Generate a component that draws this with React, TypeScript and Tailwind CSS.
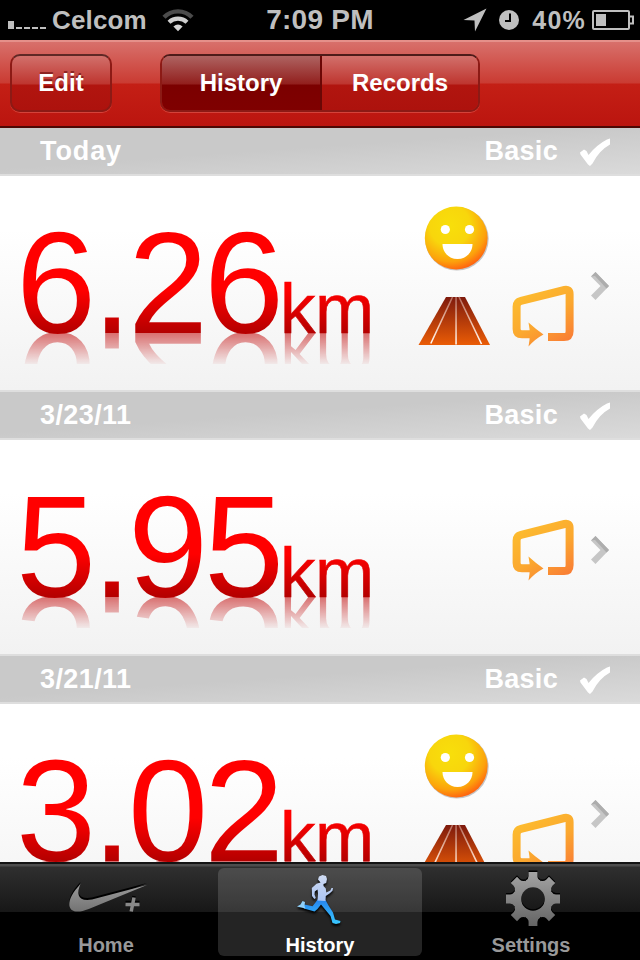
import clsx from "clsx";

interface Run {
  id: number;
  label: string;
  distance: string;
  mood: boolean;
}

const runs: Run[] = [
  { id: 1, label: "Today", distance: "6.26", mood: true },
  { id: 2, label: "3/23/11", distance: "5.95", mood: false },
  { id: 3, label: "3/21/11", distance: "3.02", mood: true },
];

function StatusBar() {
  return (
    <div className="grid h-10 grid-cols-3 items-center bg-black font-bold text-[#bfbfbf]">
      <div className="flex items-center pl-2">
        <svg width="38" height="8" viewBox="0 0 38 8" fill="#bfbfbf" className="mt-2.5">
          <path d="M0 0h6v8H0zM8 6h6v2H8zM16 6h6v2h-6zM24 6h6v2h-6zM32 6h6v2h-6z" />
        </svg>
        <span className="ml-1.5 text-[26px] leading-10 tracking-[0.15px]">Celcom</span>
        <svg width="32" height="24" viewBox="0 0 32 24" fill="none" className="ml-[15px]">
          <path d="M2 9.3A19.4 19.4 0 0 1 30 9.3" stroke="#4b4b4b" strokeWidth="4.4" />
          <path d="M7 14.2A13 13 0 0 1 25 14.2" stroke="#cfcfcf" strokeWidth="4.2" />
          <path d="M16 23.2l-4.6-4.7a7.2 7.2 0 0 1 9.2 0z" fill="#d5d5d5" />
        </svg>
      </div>
      <span className="text-center text-[28px] leading-10 tracking-[0.25px]">7:09 PM</span>
      <div className="flex items-center justify-end pr-1.5">
        <svg width="24" height="24" viewBox="0 0 24 24" fill="#bfbfbf">
          <path d="M23.5.5 12 23.5 11.5 12.5.5 12z" />
        </svg>
        <svg width="20" height="20" viewBox="0 0 20 20" className="ml-3">
          <circle cx="10" cy="10" r="10" fill="#bfbfbf" />
          <path d="M11 3.5v7.5H6" fill="none" stroke="#000" strokeWidth="2" />
        </svg>
        <span className="ml-[13px] text-[25px] leading-10 tracking-[1.2px]">40%</span>
        <svg width="42" height="20" viewBox="0 0 42 20" fill="none" className="ml-1.5">
          <rect x="1" y="1" width="36" height="18" rx="1" stroke="#bfbfbf" strokeWidth="2" />
          <path d="M38 6.5h3v7h-3" stroke="#bfbfbf" strokeWidth="2" />
          <path d="M4 4h10v12H4z" fill="#bfbfbf" />
        </svg>
      </div>
    </div>
  );
}

function NavBar() {
  return (
    <div className="flex h-22 items-start border-t-2 border-b-2 border-t-[#e5908a] border-b-[#4d0804] bg-[linear-gradient(#d8706b_0px,#ca3b32_41px,#c41f15_42px,#bb150f_84px)] pt-3 pl-2.5 text-2xl font-bold text-white">
      <button className="h-[58px] w-[102px] rounded-[10px] border-2 border-[#8c1a15] border-t-[#602825] bg-[linear-gradient(#d2706b_0px,#be352f_28px,#b1150f_29px,#ad120d_100%)] shadow-[0_1px_0_#d4433a] [text-shadow:0_-2px_0_rgba(90,0,0,0.55)]">
        Edit
      </button>
      <div className="ml-12 flex h-[58px] w-80 overflow-hidden rounded-[10px] border-2 border-[#8c1a15] border-t-[#4e1b19] shadow-[0_1px_0_#d4433a] [text-shadow:0_-2px_0_rgba(90,0,0,0.55)]">
        <button className="w-40 border-r-2 border-[#6b0705] bg-[linear-gradient(#ae6361_0px,#921f1d_28px,#7b0000_29px,#7f0000_100%)]">
          History
        </button>
        <button className="flex-1 bg-[linear-gradient(#d2706b_0px,#be352f_28px,#b1150f_29px,#ad120d_100%)]">
          Records
        </button>
      </div>
    </div>
  );
}

function Distance({ value }: { value: string }) {
  return (
    <div className="relative h-full w-[400px] pl-4 font-normal whitespace-nowrap">
      <div className="flex items-baseline bg-[linear-gradient(#ff0000_0px,#ff0000_114px,#b00000_159px)] bg-clip-text pt-[26px] text-transparent">
        <span className="text-[144px] leading-[164px] tracking-[-4.1px]">{value}</span>
        <span className="text-[71px] leading-none tracking-[-0.3px] [-webkit-text-stroke:0.6px_transparent]">km</span>
      </div>
      <div
        aria-hidden
        className="absolute top-[157px] left-0 h-[31px] w-full overflow-hidden pl-4 opacity-55 [mask-image:linear-gradient(black,rgba(0,0,0,0.08))]"
      >
        <div className="-mt-[33px] flex -scale-y-100 items-baseline text-[#c00000]">
          <span className="text-[144px] leading-[164px] tracking-[-4.1px]">{value}</span>
          <span className="text-[71px] leading-none tracking-[-0.3px]">km</span>
        </div>
      </div>
    </div>
  );
}

function SmileyIcon() {
  return (
    <svg width="68" height="68" viewBox="0 0 68 68">
      <defs>
        <radialGradient id="face" cx=".4" cy=".3" r=".72">
          <stop offset="0" stopColor="#f8df0b" />
          <stop offset=".45" stopColor="#f8d60c" />
          <stop offset=".8" stopColor="#fca20c" />
          <stop offset="1" stopColor="#ff6210" />
        </radialGradient>
      </defs>
      <circle cx="34.9" cy="34.8" r="31.8" fill="#000" opacity=".22" />
      <circle cx="34.2" cy="34" r="31.4" fill="url(#face)" />
      <circle cx="23.3" cy="25.5" r="4.6" fill="#fff" />
      <circle cx="47.5" cy="25.5" r="4.6" fill="#fff" />
      <path d="M20.500 40h30c0 8-6 15-15 15s-15-7-15-15z" fill="#fff" />
    </svg>
  );
}

function RoadIcon() {
  return (
    <svg width="72" height="50" viewBox="0 0 72 50" fill="none">
      <defs>
        <linearGradient id="road" x2="0" y2="1">
          <stop offset="0" stopColor="#7e1a0d" />
          <stop offset="1" stopColor="#ea5c06" />
        </linearGradient>
        <linearGradient id="lane" x1="0" x2="0" y1="1" y2="49" gradientUnits="userSpaceOnUse">
          <stop offset="0" stopColor="#b56b5c" />
          <stop offset=".6" stopColor="#f3c9b3" />
          <stop offset="1" stopColor="#fff" />
        </linearGradient>
      </defs>
      <path d="M28 1h19l25 48H.5z" fill="url(#road)" />
      <path d="M34.500 1 12.800 47.500M41 1l22.500 47" stroke="url(#lane)" strokeWidth="1.6" />
      <path d="M37.300 1h1.500v47.500h-1.500z" fill="url(#lane)" />
    </svg>
  );
}

function RouteIcon() {
  return (
    <svg width="62" height="62" viewBox="0 0 62 62" fill="none">
      <defs>
        <linearGradient id="route" x1="10" y1="0" x2="50" y2="62" gradientUnits="userSpaceOnUse">
          <stop offset="0" stopColor="#fdc02f" />
          <stop offset=".55" stopColor="#fba82f" />
          <stop offset="1" stopColor="#f97b35" />
        </linearGradient>
      </defs>
      <path
        d="M18 49.300H10Q4.600 49.300 4.600 44V21.500Q4.600 16.800 9 15.800L52.500 5Q57.600 4 57.600 9V46Q57.600 52 52 52H36"
        stroke="url(#route)"
        strokeWidth="8"
      />
      <path d="M16.500 37.500Q23 43.500 31.500 49.500 23 54 16.500 61.500 17.800 55 17.800 49.500T16.500 37.500z" fill="url(#route)" />
    </svg>
  );
}

function RunRow({ run }: { run: Run }) {
  return (
    <section className="shrink-0">
      <header className="flex h-12 items-center border-b-2 border-[#dedede] bg-[linear-gradient(176deg,#c9c9c9_45%,#dadada)] pl-10 text-[27px] leading-none font-bold text-white">
        <span className={run.label === "Today" ? "tracking-[0.9px]" : "tracking-[0.4px]"}>
          {run.label}
        </span>
        <span className="ml-auto tracking-[0.3px]">Basic</span>
        <svg width="32" height="30" viewBox="0 0 32 30" fill="#fff" className="mt-1 mr-[29px] ml-[21px]">
          <path d="M1 14.500 5 11.500 7.500 13 9.500 17Q18 6.500 28 1.500L31 .500V6.500Q20 12.500 13.500 25.500L11 28 9 26.500 1.500 16.500z" />
        </svg>
      </header>
      <div className="flex h-54 border-b-2 border-[#dedede] bg-linear-to-b from-white from-25% to-[#f2f2f2]">
        <Distance value={run.distance} />
        {run.mood ? (
          <div className="grid grid-cols-[94px_78px] content-start pt-7 pl-4">
            <div className="col-span-2 h-[68px] pl-1.5">
              <SmileyIcon />
            </div>
            <div className="mt-6 h-[50px] pl-0.5">
              <RoadIcon />
            </div>
            <div className="mt-[13px] pl-0.5">
              <RouteIcon />
            </div>
          </div>
        ) : (
          <div className="flex w-[188px] justify-end pt-[79px] pr-[14px]">
            <RouteIcon />
          </div>
        )}
        <svg width="22" height="30" viewBox="0 0 22 30" className="mt-[95px]">
          <path d="M3 5.500 7.500 1 21 15 7.500 29 3 24.500 12.500 15z" fill="#c6c6c6" />
          <path d="M3 5.500 7.500 1 21 15 18.500 17.500 7 5z" fill="#adadad" />
        </svg>
      </div>
    </section>
  );
}

function SwooshIcon() {
  return (
    <svg width="80" height="34" viewBox="0 0 80 34">
      <defs>
        <linearGradient id="swoosh" x2="0" y2="1">
          <stop offset="0" stopColor="#9c9c9c" />
          <stop offset="1" stopColor="#737373" />
        </linearGradient>
      </defs>
      <path d="M11.500 0C4 8 0 15 .300 21c.700 7 8 8.500 19.500 4L78 1 23 15.500C9 18 7 10 11.500 0z" fill="#000" />
      <path d="M11.500 2C4 10 0 17 .300 23c.700 7 8 8.500 19.500 4L78 3 23 17.500C9 20 7 12 11.500 2z" fill="url(#swoosh)" />
      <path d="m65 14-2.800 14M56.500 20.500h14" stroke="#000" strokeWidth="3.500" />
      <path d="m65 15.500-2.800 14M56.500 22.500h14" stroke="#888" strokeWidth="3.500" />
    </svg>
  );
}

function RunnerIcon() {
  return (
    <svg width="46" height="52" viewBox="0 0 46 52" className="overflow-visible">
      <defs>
        <linearGradient id="legs" x2="0" y2="1">
          <stop offset="0" stopColor="#2683ee" />
          <stop offset="1" stopColor="#39c8ff" />
        </linearGradient>
        <linearGradient id="torso" x1="0" x2="0" y1="1" y2="28" gradientUnits="userSpaceOnUse">
          <stop offset="0" stopColor="#cfdbf2" />
          <stop offset="1" stopColor="#a9c3f3" />
        </linearGradient>
      </defs>
      <g className="drop-shadow-[0_2px_1px_#000]">
        <path
          d="M20.500 25.500 28.500 26 31.500 31.500 36 38.500 38 45.500 43.500 47 43 49 39 50 35.500 49 33.500 42 24 30.500 20.500 35 17.500 37.500 7 34.500 5.500 32.500 7.500 30.500 15.500 32.300 18.500 28.500z"
          fill="url(#legs)"
        />
        <path d="M0 32.500 3.500 30.500 5.500 27 8 28 7.500 32 8.500 34.500 4 33.500z" fill="#8fd0fa" />
        <path
          d="M21 5.500 22 2.500 25.500 1 29 2 30 5 29.200 9 26.500 10 26.500 12 28.800 14.500 29.300 18.500 33.300 16.500 34.500 14 36 14 35.500 16.800 32.500 19.500 28.800 22 28.500 27 20.500 26.500 21 19.500 20.500 15.500 17.800 17.500 17.500 20.500 18.800 24 17.300 25 15 22 14.800 14 19.500 9.800 23.500 8.500z"
          fill="url(#torso)"
        />
      </g>
    </svg>
  );
}

function GearIcon() {
  return (
    <svg width="56" height="58" viewBox="-28 -29 56 58">
      <defs>
        <linearGradient id="gear" x1="0" x2="0" y1="-27" y2="27" gradientUnits="userSpaceOnUse">
          <stop offset="0" stopColor="#a4a4a4" />
          <stop offset="1" stopColor="#646464" />
        </linearGradient>
        <g id="teeth" fill="#fff">
          <path d="M-4.400-27h8.800v4q0 3 3 4.500L6-15H-6l-1.200-3.500q2.800-1.500 2.800-4.500z" />
          <path d="M-4.400-27h8.800v4q0 3 3 4.500L6-15H-6l-1.200-3.500q2.800-1.500 2.800-4.500z" transform="rotate(90)" />
          <path d="M-4.400-27h8.800v4q0 3 3 4.500L6-15H-6l-1.200-3.500q2.800-1.500 2.800-4.500z" transform="rotate(180)" />
          <path d="M-4.400-27h8.800v4q0 3 3 4.500L6-15H-6l-1.200-3.500q2.800-1.500 2.800-4.500z" transform="rotate(270)" />
        </g>
        <mask id="gearShape" maskUnits="userSpaceOnUse" x="-28" y="-29" width="56" height="58">
          <circle r="19.500" fill="#fff" />
          <use href="#teeth" />
          <use href="#teeth" transform="rotate(45)" />
          <circle r="11.800" fill="#000" />
        </mask>
      </defs>
      <g transform="translate(0 -1.500)">
        <rect x="-28" y="-29" width="56" height="58" fill="#000" mask="url(#gearShape)" />
      </g>
      <rect x="-28" y="-29" width="56" height="58" fill="url(#gear)" mask="url(#gearShape)" />
    </svg>
  );
}

const tabs = [
  { name: "Home", icon: <SwooshIcon />, iconClass: "pt-3.5 pl-1.5" },
  { name: "History", icon: <RunnerIcon />, iconClass: "pt-1.5" },
  { name: "Settings", icon: <GearIcon />, iconClass: "pt-0.5 pl-1" },
];

function TabBar({ active }: { active: string }) {
  return (
    <nav className="grid h-[98px] grid-cols-[212px_204px_1fr] items-start border-t-2 border-[#141414] bg-[linear-gradient(#4d4d4d_0px,#4d4d4d_2px,#2f2f2f_3px,#171717_48px,#000_48px)] pt-1 pr-0.5 pl-1.5">
      {tabs.map((tab) => (
        <div
          key={tab.name}
          className={clsx(
            "flex h-22 flex-col items-center rounded-md",
            tab.name === active ? "bg-white/14 text-white" : "pr-3 text-[#999]",
            tab.name === "Settings" && "ml-3.5"
          )}
        >
          <div className={clsx("h-[66px]", tab.iconClass)}>{tab.icon}</div>
          <span className="text-xl leading-[22px] font-bold">{tab.name}</span>
        </div>
      ))}
    </nav>
  );
}

export default function App() {
  return (
    <div className="flex h-[960px] w-[640px] flex-col overflow-hidden bg-white font-['Liberation_Sans',Arial,sans-serif]">
      <StatusBar />
      <NavBar />
      <main className="flex min-h-0 flex-1 flex-col overflow-hidden">
        {runs.map((run) => (
          <RunRow key={run.id} run={run} />
        ))}
      </main>
      <TabBar active="History" />
    </div>
  );
}
